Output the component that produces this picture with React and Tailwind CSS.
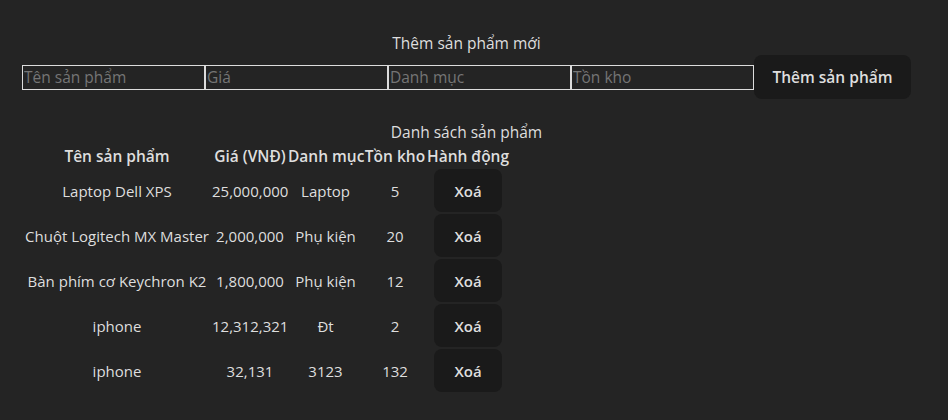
import React, { useState } from 'react';

const initialProducts = [
  { id: 1, name: 'Laptop Dell XPS', price: 25000000, category: 'Laptop', stock: 5 },
  { id: 2, name: 'Chuột Logitech MX Master', price: 2000000, category: 'Phụ kiện', stock: 20 },
  { id: 3, name: 'Bàn phím cơ Keychron K2', price: 1800000, category: 'Phụ kiện', stock: 12 },
  { id: 4, name: 'iphone', price: 12312321, category: 'Đt', stock: 2 },
  { id: 5, name: 'iphone', price: 32131, category: '3123', stock: 132 },
];

const App = () => {
  const [products, setProducts] = useState(initialProducts);
  const [form, setForm] = useState({ name: '', price: '', category: '', stock: '' });

  const handleChange = (key) => (e) => setForm({ ...form, [key]: e.target.value });

  const handleAdd = (e) => {
    e.preventDefault();
    if (form.name.trim() === '') return;
    setProducts([
      ...products,
      { id: Date.now(), name: form.name, price: Number(form.price) || 0, category: form.category, stock: Number(form.stock) || 0 },
    ]);
    setForm({ name: '', price: '', category: '', stock: '' });
  };

  const handleDelete = (id) => setProducts(products.filter((p) => p.id !== id));

  const inputClass =
    'w-[183px] h-[25px] border border-[#dcdcdc] bg-transparent px-px text-[15.5px] text-[#dedede] outline-none placeholder:text-[#757575]';

  return (
    <div className="min-h-screen bg-[#242424] text-[#dedede] font-['Open_Sans','Noto_Sans',sans-serif] text-[15.5px] leading-6">
      <div className="w-[889px] ml-[22px] pt-[31px]">
        {/* Add form */}
        <div className="text-center">Thêm sản phẩm mới</div>
        <form onSubmit={handleAdd} className="flex items-center">
          <input className={inputClass} placeholder="Tên sản phẩm" value={form.name} onChange={handleChange('name')} />
          <input className={inputClass} placeholder="Giá" value={form.price} onChange={handleChange('price')} />
          <input className={inputClass} placeholder="Danh mục" value={form.category} onChange={handleChange('category')} />
          <input className={inputClass} placeholder="Tồn kho" value={form.stock} onChange={handleChange('stock')} />
          <button type="submit" className="w-[157px] h-[44px] rounded-lg bg-[#1a1a1a] font-semibold">
            Thêm sản phẩm
          </button>
        </form>

        {/* Product list */}
        <div className="mt-[21px] text-center">Danh sách sản phẩm</div>
        <table className="w-[487px] table-fixed border-collapse text-center whitespace-nowrap text-[15px]">
          <thead>
            <tr className="h-[23px] text-[15.5px]">
              <th className="w-[190px] font-semibold">Tên sản phẩm</th>
              <th className="w-[76px] font-semibold">Giá (VNĐ)</th>
              <th className="w-[75px] font-semibold">Danh mục</th>
              <th className="w-[64px] font-semibold">Tồn kho</th>
              <th className="w-[82px] font-semibold">Hành động</th>
            </tr>
          </thead>
          <tbody>
            {products.map((p) => (
              <tr key={p.id}>
                <td className="py-px">{p.name}</td>
                <td className="py-px">{p.price.toLocaleString('en-US')}</td>
                <td className="py-px">{p.category}</td>
                <td className="py-px">{p.stock}</td>
                <td className="py-px">
                  <button
                    onClick={() => handleDelete(p.id)}
                    className="mx-auto block w-[68px] h-[43px] rounded-lg bg-[#1a1a1a] font-semibold text-[15px]"
                  >
                    Xoá
                  </button>
                </td>
              </tr>
            ))}
          </tbody>
        </table>
      </div>
    </div>
  );
};

export default App;
